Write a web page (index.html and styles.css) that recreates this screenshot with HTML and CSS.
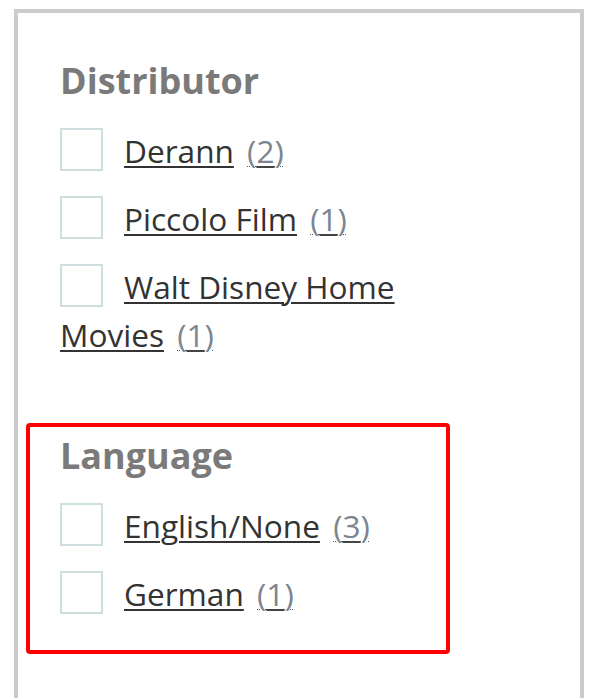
FILE: index.html
```html
<!DOCTYPE html>
<html>
<head>
<meta charset="utf-8">
<link rel="stylesheet" href="styles.css">
</head>
<body>
<div class="panel">
  <section class="facet">
    <h2 class="facet-title">Distributor</h2>
    <ul class="facet-list">
      <li class="facet-item"><span class="check"></span><a class="name" href="#">Derann</a> <a class="count" href="#">(<span class="num">2</span>)</a></li>
      <li class="facet-item"><span class="check"></span><a class="name" href="#">Piccolo Film</a> <a class="count" href="#">(<span class="num">1</span>)</a></li>
      <li class="facet-item"><span class="check"></span><a class="name" href="#">Walt Disney Home Movies</a> <a class="count" href="#">(<span class="num">1</span>)</a></li>
    </ul>
  </section>
  <section class="facet facet-highlight">
    <h2 class="facet-title">Language</h2>
    <ul class="facet-list">
      <li class="facet-item"><span class="check"></span><a class="name" href="#">English/None</a> <a class="count" href="#">(<span class="num">3</span>)</a></li>
      <li class="facet-item"><span class="check"></span><a class="name" href="#">German</a> <a class="count" href="#">(<span class="num">1</span>)</a></li>
    </ul>
  </section>
</div>
</body>
</html>
```
FILE: styles.css
```css
html, body {
  margin: 0;
  padding: 0;
  background: #fff;
}
body {
  font-family: "Open Sans", "Noto Sans", sans-serif;
  overflow: hidden;
}
.panel {
  margin: 9px 0 0 14px;
  width: 554px;
  min-height: 760px;
  border: 4px solid #cccccc;
  padding: 35px 0 0 8px;
  box-sizing: content-box;
}
.facet {
  width: 356px;
  padding: 7px 30px 12px 30px;
  border: 4px solid transparent;
  border-radius: 4px;
}
.facet + .facet {
  margin-top: 28px;
}
.facet-highlight {
  border-color: #ff0000;
}
.facet-title {
  margin: 0 0 25px 0;
  font-size: 36px;
  font-weight: 700;
  color: #7a7a7a;
  line-height: 1.2;
}
.facet-list {
  list-style: none;
  margin: 0;
  padding: 0;
}
.facet-item {
  font-size: 31.6px;
  line-height: 48px;
  color: #333;
  margin-bottom: 20px;
}
.check {
  display: inline-block;
  width: 39px;
  height: 39px;
  border: 2px solid #cfdfdf;
  vertical-align: -8px;
  margin-right: 21px;
  box-sizing: content-box;
}
.name {
  color: #333;
  text-decoration: underline;
  text-underline-offset: 3px;
  text-decoration-thickness: 2px;
}
.count {
  color: #7c8591;
  margin-left: 5px;
  text-decoration: underline dotted #555;
  text-decoration-thickness: 1px;
  text-underline-offset: 3px;
}
.num {
  text-decoration: underline solid #444;
  text-decoration-thickness: 2px;
  text-underline-offset: 3px;
}
```
